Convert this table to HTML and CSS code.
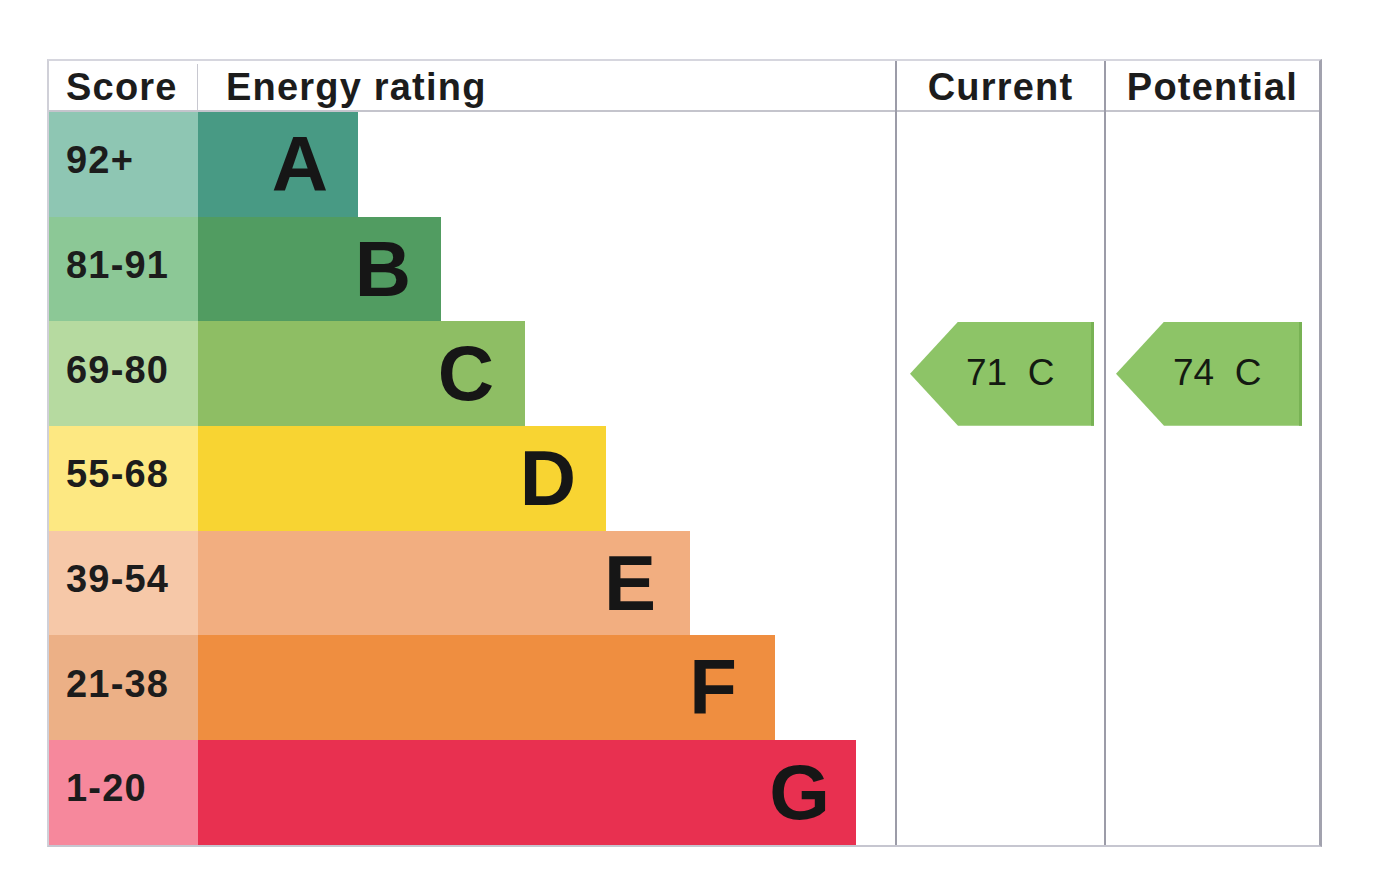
FILE: index.html
```html
<!DOCTYPE html>
<html lang="en">
<head>
<meta charset="utf-8">
<title>Energy Performance Certificate</title>
<link rel="stylesheet" href="styles.css">
</head>
<body>
<div class="epc">
  <div class="col col-scale">
    <div class="head">
      <div class="h-score">Score</div>
      <div class="h-rating">Energy rating</div>
    </div>
    <div class="band"><div class="score s-a">92+</div><div class="bar b-a">A</div></div>
    <div class="band"><div class="score s-b">81-91</div><div class="bar b-b">B</div></div>
    <div class="band"><div class="score s-c">69-80</div><div class="bar b-c">C</div></div>
    <div class="band"><div class="score s-d">55-68</div><div class="bar b-d">D</div></div>
    <div class="band"><div class="score s-e">39-54</div><div class="bar b-e">E</div></div>
    <div class="band"><div class="score s-f">21-38</div><div class="bar b-f">F</div></div>
    <div class="band"><div class="score s-g">1-20</div><div class="bar b-g">G</div></div>
  </div>
  <div class="col col-current">
    <div class="head head-center">Current</div>
    <div class="slot"></div>
    <div class="slot"></div>
    <div class="slot slot-arrow"><div class="arrow arrow-current">71  C</div></div>
  </div>
  <div class="col col-potential">
    <div class="head head-center">Potential</div>
    <div class="slot"></div>
    <div class="slot"></div>
    <div class="slot slot-arrow"><div class="arrow arrow-potential">74  C</div></div>
  </div>
</div>
</body>
</html>
```
FILE: styles.css
```css
* { box-sizing: border-box; }

html, body {
  margin: 0;
  padding: 0;
  background: #ffffff;
}

body {
  font-family: "Liberation Sans", Arial, sans-serif;
  color: #1a1a1a;
  padding: 59px 0 0 47px;
}

.epc {
  display: flex;
  width: 1275px;
  height: 788px;
  border-top: 2px solid #d6d6de;
  border-left: 2px solid #d0d0d8;
  border-bottom: 2px solid #c6c6d0;
  border-right: 3px solid #a2a2ae;
}

.col {
  display: flex;
  flex-direction: column;
}

.col-scale { width: 846px; }

.col-current {
  width: 209px;
  border-left: 2px solid #9c9ca8;
}

.col-potential {
  width: 215px;
  border-left: 2px solid #9c9ca8;
}

.head {
  height: 51px;
  flex: none;
  display: flex;
  border-bottom: 2px solid #c4c4cc;
  font-size: 38px;
  font-weight: bold;
  letter-spacing: 1.2px;
  line-height: 47px;
  padding-top: 3px;
  color: #1c1c1c;
}

.head-center { justify-content: center; }

.h-score {
  width: 149px;
  padding-left: 17px;
  border-right: 1px solid #c8c8d0;
}

.h-rating { padding-left: 28px; }

.band {
  display: flex;
  height: 104.7px;
  flex: none;
}

.score {
  width: 149px;
  display: flex;
  align-items: center;
  padding-left: 17px;
  padding-bottom: 7px;
  font-size: 38px;
  font-weight: bold;
  letter-spacing: 1.2px;
  color: #1c1c1c;
}

.bar {
  display: flex;
  align-items: center;
  justify-content: flex-end;
  padding-right: 30px;
  font-size: 78px;
  font-weight: bold;
  color: #161616;
}

.s-a { background: #8ec6b3; }
.b-a { background: #489a84; width: 160px; }
.s-b { background: #8cc896; }
.b-b { background: #519c61; width: 243px; }
.s-c { background: #b6daa0; }
.b-c { background: #8ebe64; width: 327px; padding-right: 31px; }
.s-d { background: #fde882; }
.b-d { background: #f8d432; width: 408px; }
.s-e { background: #f6c8a8; }
.b-e { background: #f2ae80; width: 492px; padding-right: 34px; }
.s-f { background: #ecb086; }
.b-f { background: #ef8e40; width: 577px; padding-right: 38px; }
.s-g { background: #f6889c; }
.b-g { background: #e83050; width: 658px; padding-right: 26px; }

.slot {
  height: 104.7px;
  flex: none;
}

.slot-arrow {
  display: flex;
  align-items: center;
}

.arrow {
  height: 104px;
  background: #8dc467;
  border-right: 3px solid #78b254;
  clip-path: polygon(48px 0, 100% 0, 100% 100%, 48px 100%, 0 50%);
  display: flex;
  align-items: center;
  white-space: pre;
  font-size: 37px;
  color: #141a12;
  padding-bottom: 1px;
}

.arrow-current {
  width: 184px;
  margin-left: 13px;
  padding-left: 56px;
}

.arrow-potential {
  width: 186px;
  margin-left: 10px;
  padding-left: 57px;
}
```
